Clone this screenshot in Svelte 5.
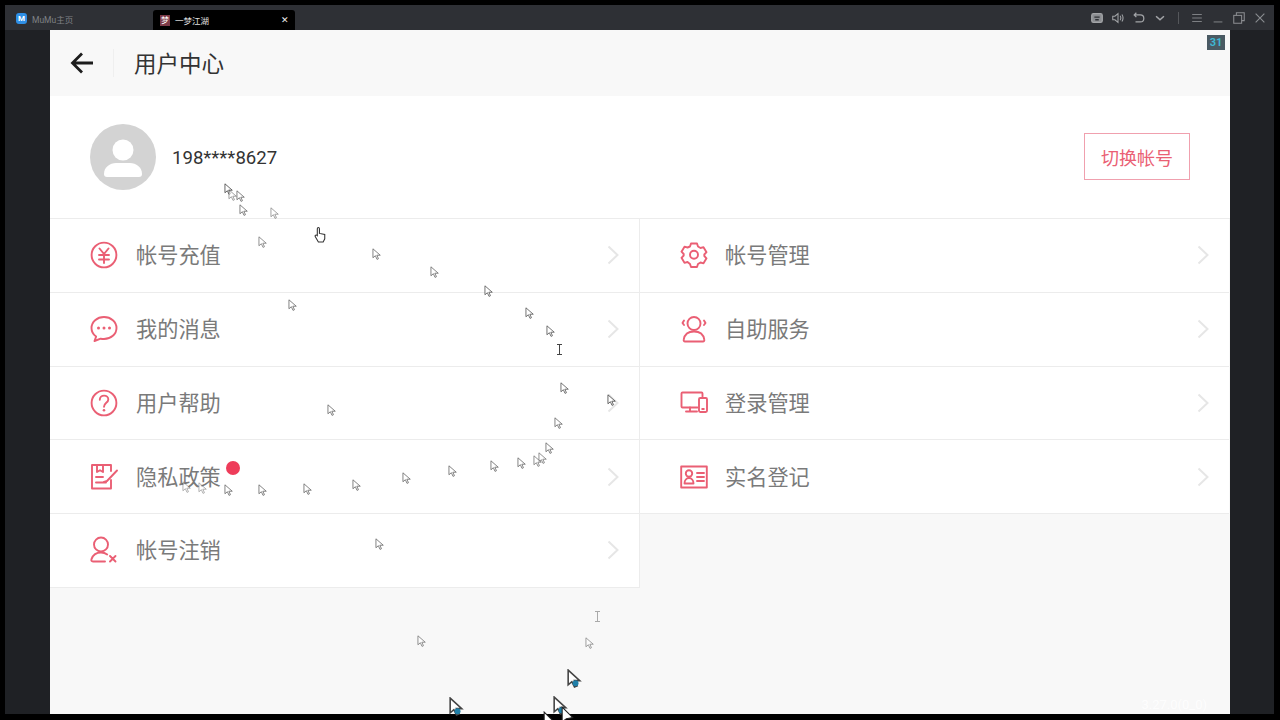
<script>
    // cursor trail left on the screen by the recording: [x, y, opacity]
    const cursors = [
        [224, 183, 1], [228, 189, .6], [236, 190, .8], [239, 204, .8],
        [270, 207, .6], [258, 236, .7], [372, 248, .8], [430, 266, .8],
        [484, 285, .9], [288, 299, .8], [525, 307, .9], [546, 325, .9],
        [560, 382, .9], [607, 394, 1], [327, 404, .8], [554, 417, .8],
        [545, 442, .8], [538, 452, .7], [533, 455, .7], [517, 457, .8],
        [490, 460, .8], [448, 465, .8], [402, 472, .8], [352, 479, .8],
        [303, 483, .8], [258, 484, .8], [224, 484, .8], [198, 482, .5],
        [182, 481, .5], [375, 538, .8], [417, 635, .7], [585, 637, .6]
    ];
    const busy = [[567, 669], [449, 697], [553, 696]];

    const left = [
        { label: '帐号充值', icon: 'yen' },
        { label: '我的消息', icon: 'chat' },
        { label: '用户帮助', icon: 'help' },
        { label: '隐私政策', icon: 'policy', dot: true },
        { label: '帐号注销', icon: 'remove' }
    ];
    const right = [
        { label: '帐号管理', icon: 'gear' },
        { label: '自助服务', icon: 'service' },
        { label: '登录管理', icon: 'devices' },
        { label: '实名登记', icon: 'idcard' }
    ];
</script>

{#snippet icon(name)}
    <svg class="icon" viewBox="0 0 28 28" fill="none" stroke="#ea5f74" stroke-width="1.900" stroke-linecap="round" stroke-linejoin="round">
        {#if name === 'yen'}
            <circle cx="14" cy="14" r="12.400" />
            <path d="M9.500 7.500 14 13l4.500-5.500M9 14h10M9 18.500h10M14 13v9" />
        {:else if name === 'chat'}
            <path d="M14 2C7 2 1.500 6.800 1.500 13c0 3.600 1.800 6.600 4.600 8.600L4.500 26l6.200-2.300c1 .2 2.200.3 3.300.3 7 0 12.500-4.800 12.500-11S21 2 14 2Z" />
            <circle cx="8.500" cy="13" r="1.500" fill="#ea5f74" stroke="none" />
            <circle cx="14" cy="13" r="1.500" fill="#ea5f74" stroke="none" />
            <circle cx="19.500" cy="13" r="1.500" fill="#ea5f74" stroke="none" />
        {:else if name === 'help'}
            <circle cx="14" cy="14" r="12.400" />
            <path d="M9.800 10.800c0-2.500 1.900-4.200 4.300-4.200s4.200 1.600 4.200 3.800c0 3.300-4.300 3.500-4.300 7.300" />
            <circle cx="14" cy="21.300" r="1.300" fill="#ea5f74" stroke="none" />
        {:else if name === 'policy'}
            <path d="M21 8V2H2v23.500h19V17" />
            <path d="M7 2v7l3-1.800L13 9V2M6 14h7M6 19.500h10" />
            <path d="M27 7.500 17 18l-3 1" />
        {:else if name === 'remove'}
            <circle cx="11" cy="8.500" r="7" />
            <path d="M3 25.500c-1.500 0-2-1-1.500-2.400C3 19 6.500 16.500 11 16.500c2.500 0 4.500.7 6.200 2M3 25.500h12" />
            <path d="m20 20 5.500 5.500M25.500 20 20 25.500" />
        {:else if name === 'gear'}
            <path d="M11 2.500h6l1 3 2.500 1.500 3-.8 3 5-2.200 2.300v1.500l2.200 2.300-3 5-3-.8-2.500 1.500-1 3h-6l-1-3L7.500 21l-3 .8-3-5 2.200-2.300V13L1.500 10.700l3-5 3 .8L10 5.500Z" />
            <circle cx="14" cy="13.800" r="4" />
        {:else if name === 'service'}
            <circle cx="14" cy="8.500" r="6.500" />
            <path d="M5 26.500c-1 0-1.500-.7-1.300-1.800C4.500 19.500 8.500 16.500 14 16.500s9.500 3 10.300 8.200c.2 1.100-.3 1.800-1.300 1.800Z" />
            <path d="M4 5.500 2.500 8 4 10M24 5.500 25.500 8 24 10" />
        {:else if name === 'devices'}
            <path d="M17.500 18.500H2.500c-.6 0-1-.4-1-1V4.500c0-.6.400-1 1-1h19c.6 0 1 .4 1 1v3" />
            <path d="M10 18.500v4M6 22.500h11" />
            <rect x="19" y="9" width="8" height="14" rx="1.200" />
            <path d="M22.200 20h1.600" />
        {:else if name === 'idcard'}
            <rect x="1.200" y="3.500" width="25.600" height="21" />
            <circle cx="9" cy="10.500" r="3.200" />
            <path d="M4.500 20.500c0-3.200 2-5.500 4.500-5.500s4.500 2.300 4.500 5.500ZM17 10h7M17 14h7M17 18h7" />
        {/if}
    </svg>
{/snippet}

{#snippet row(item)}
    <div class="row">
        {@render icon(item.icon)}
        <span class="label">{item.label}</span>
        {#if item.dot}<span class="dot"></span>{/if}
        <svg class="chev" viewBox="0 0 12 20" fill="none" stroke="#e6e6e6" stroke-width="2">
            <path d="m1.500 1.500 9 8.500-9 8.500" />
        </svg>
    </div>
{/snippet}

<div class="screen">
    <div class="window">
        <div class="titlebar">
            <div class="tab home">
                <span class="mumu">M</span>
                <span>MuMu主页</span>
            </div>
            <div class="tab active">
                <span class="game">梦</span>
                <span>一梦江湖</span>
                <span class="close">✕</span>
            </div>
            <div class="tools">
                <svg viewBox="0 0 16 16" fill="none" stroke="#a3a5a8" stroke-width="1.500"><rect x="2" y="3" width="12" height="10" rx="2" fill="#8a8c90"/><path d="M5 7h6M6 10h4" stroke="#2e3035"/></svg>
                <svg viewBox="0 0 16 16" fill="none" stroke="#a3a5a8" stroke-width="1.200"><path d="M2 6v4h2.500L8 13V3L4.500 6ZM10.500 5.500c1 1.500 1 3.500 0 5M12.500 4c1.600 2.500 1.600 5.500 0 8"/></svg>
                <svg viewBox="0 0 16 16" fill="none" stroke="#a3a5a8" stroke-width="1.400"><path d="M5 2 2.500 4.500 5 7M3 4.500h6.500a3.500 3.500 0 0 1 0 8H4"/></svg>
                <svg viewBox="0 0 16 16" fill="none" stroke="#a3a5a8" stroke-width="1.800"><path d="m3.500 6 4.500 4 4.500-4"/></svg>
                <span class="sep"></span>
                <svg viewBox="0 0 16 16" fill="none" stroke="#7d7f83" stroke-width="1.200"><path d="M2.500 4h11M2.500 8h11M2.500 12h11"/></svg>
                <svg viewBox="0 0 16 16" fill="none" stroke="#7d7f83" stroke-width="1.200"><path d="M3 12.500h10"/></svg>
                <svg viewBox="0 0 16 16" fill="none" stroke="#8a8c90" stroke-width="1.200"><rect x="2" y="5" width="9" height="9"/><path d="M5 5V2h9v9h-3"/></svg>
                <svg viewBox="0 0 16 16" fill="none" stroke="#8a8c90" stroke-width="1.300"><path d="m3 3 10 10M13 3 3 13"/></svg>
            </div>
        </div>

        <div class="body">
            <main class="content">
                <header class="head">
                    <svg class="back" viewBox="0 0 24 22" fill="none" stroke="#1d1d1d" stroke-width="2.800">
                        <path d="M23 11H3M12 1.500 2.500 11l9.500 9.500" />
                    </svg>
                    <span class="divider"></span>
                    <h1>用户中心</h1>
                </header>

                <section class="profile">
                    <div class="avatar">
                        <svg viewBox="0 0 66 66" fill="#fff">
                            <circle cx="33" cy="26" r="10.500" />
                            <path d="M17 53c-2 0-3-1-3-3 0-7 6-11 12-11h14c6 0 12 4 12 11 0 2-1 3-3 3Z" />
                        </svg>
                    </div>
                    <span class="phone">198****8627</span>
                    <button class="switch">切换帐号</button>
                </section>

                <section class="menu">
                    <div class="col">
                        {#each left as item}
                            {@render row(item)}
                        {/each}
                    </div>
                    <div class="col">
                        {#each right as item}
                            {@render row(item)}
                        {/each}
                    </div>
                </section>

                <span class="fps">31</span>
                <span class="version">3.27.0(0_0)</span>
            </main>
        </div>
    </div>

    <!-- recorded pointer trail -->
    {#each cursors as [x, y, o]}
        <svg class="cursor" style="left:{x}px;top:{y}px;opacity:{o}" viewBox="0 0 12 16" fill="#fff" stroke="#444" stroke-width="1">
            <path d="M1 1v11l3-2.500 2 4.500 1.800-.8-2-4.300H10Z" />
        </svg>
    {/each}
    {#each busy as [x, y]}
        <svg class="cursor big" style="left:{x}px;top:{y}px" viewBox="0 0 14 18">
            <path d="M1 1v14l3.500-3 2.500 5 2.500-1-2.500-5H12Z" fill="#fff" stroke="#444" stroke-width="1.500" />
            <circle cx="8" cy="13.500" r="2.800" fill="#1f7fa8" />
        </svg>
    {/each}
    <svg class="cursor hand" style="left:314px;top:226px" viewBox="0 0 12 16" fill="#fff" stroke="#333" stroke-width="1">
        <path d="M3 9V2.500c0-1.500 2-1.500 2 0V7l5 1v4l-1.500 3H4L1 10c-.6-1.300 1-2 2-1Z" />
    </svg>
    <svg class="beam" style="left:556px;top:344px" viewBox="0 0 7 11" fill="none" stroke="#444"><path d="M1 .5h5M3.500.5v10M1 10.500h5" /></svg>
    <svg class="beam" style="left:594px;top:611px" viewBox="0 0 7 11" fill="none" stroke="#aaa"><path d="M1 .5h5M3.500.5v10M1 10.500h5" /></svg>
    <svg class="cursor big" style="left:543px;top:711px" viewBox="0 0 14 18"><path d="M1 1v14l4-3 6-1Z" fill="#fff" stroke="#222"/></svg>
    <svg class="cursor big" style="left:561px;top:706px" viewBox="0 0 14 18"><path d="M1 1v14l4-3 6-1Z" fill="#fff" stroke="#222"/></svg>
</div>

<style>
    :global(body) {
        background: #000;
    }

    .screen {
        position: relative;
        width: 1280px;
        height: 720px;
        overflow: hidden;
        background: #000;
        padding: 5px 6px 6px 5px;
        box-sizing: border-box;
        font-family: Roboto, "Noto Sans CJK SC", sans-serif;
    }

    .window {
        height: 100%;
        display: flex;
        flex-direction: column;
        background: #1f2125;
    }

    .titlebar {
        height: 25px;
        flex: none;
        background: #2e3035;
        display: flex;
        align-items: flex-end;
        font-size: 8.500px;
        color: #7f8185;
    }

    .tab {
        display: flex;
        align-items: center;
        gap: 5px;
        height: 20px;
    }

    .tab.home {
        width: 148px;
        padding-left: 11px;
        box-sizing: border-box;
        padding-bottom: 3px;
    }

    .mumu {
        width: 11px;
        height: 11px;
        border-radius: 3px;
        background: #2f8fe6;
        color: #fff;
        font-size: 8px;
        font-weight: 700;
        line-height: 11px;
        text-align: center;
    }

    .tab.active {
        width: 142px;
        box-sizing: border-box;
        padding: 0 6px 0 7px;
        background: #000;
        color: #e2e2e2;
        border-radius: 3px 3px 0 0;
    }

    .game {
        width: 10px;
        height: 11px;
        background: #7c3a48;
        color: #fff;
        font-size: 8px;
        line-height: 11px;
        text-align: center;
    }

    .close {
        margin-left: auto;
        font-size: 9px;
        color: #eee;
    }

    .tools {
        margin-left: auto;
        align-self: center;
        display: flex;
        align-items: center;
        gap: 7px;
        padding-right: 7px;
    }

    .tools svg {
        width: 14px;
        height: 14px;
    }

    .sep {
        width: 1px;
        height: 12px;
        background: #55575b;
        margin: 0 4px;
    }

    .body {
        flex: 1;
        min-height: 0;
        padding: 0 44px 0 45px;
    }

    .content {
        position: relative;
        height: 100%;
        background: #f8f8f8;
    }

    .head {
        height: 66px;
        display: flex;
        align-items: center;
        padding-left: 20px;
    }

    .back {
        width: 24px;
        height: 22px;
    }

    .divider {
        width: 1px;
        height: 28px;
        background: #efefef;
        margin: 0 20px 0 19px;
    }

    h1 {
        margin: -2px 0 0;
        font-size: 22.500px;
        font-weight: 400;
        color: #333;
    }

    .profile {
        height: 123px;
        background: #fff;
        display: flex;
        align-items: center;
        padding: 0 40px;
        box-sizing: border-box;
        border-bottom: 1px solid #ececec;
    }

    .avatar {
        width: 66px;
        height: 66px;
        border-radius: 50%;
        background: #d3d3d3;
    }

    .avatar svg {
        display: block;
    }

    .phone {
        margin: 2px 0 0 16px;
        font-size: 18.600px;
        color: #333;
    }

    .switch {
        margin: -1px 0 0 auto;
        width: 106px;
        height: 47px;
        background: #fff;
        border: 1px solid #f0a0ae;
        padding: 0;
        border-radius: 0;
        color: #ea5f74;
        font-family: inherit;
        font-size: 18px;
    }

    .menu {
        display: grid;
        grid-template-columns: 590px 589px;
    }

    .col:first-child {
        border-right: 1px solid #ececec;
        box-sizing: border-box;
    }

    .row {
        height: 73.750px;
        box-sizing: border-box;
        background: #fff;
        border-bottom: 1px solid #ececec;
        display: flex;
        align-items: center;
        padding: 0 20px 0 40px;
    }

    .icon {
        width: 28px;
        height: 28px;
        flex: none;
    }

    .label {
        margin: -3px 0 0 18px;
        font-size: 21.200px;
        color: #7a7a7a;
    }

    .col + .col .label {
        margin-left: 17px;
    }

    .dot {
        width: 14px;
        height: 14px;
        border-radius: 50%;
        background: #ee3c5a;
        margin: -17px 0 0 5px;
    }

    .chev {
        width: 12px;
        height: 20px;
        margin-left: auto;
    }

    .fps {
        position: absolute;
        top: 5px;
        right: 5px;
        width: 18px;
        height: 15px;
        background: #4a5a63;
        color: #3fb7d4;
        font-size: 11px;
        font-weight: 700;
        line-height: 15px;
        text-align: center;
    }

    .version {
        position: absolute;
        right: 23px;
        bottom: 2px;
        font-size: 13px;
        color: #fff;
        opacity: .85;
    }

    .cursor {
        position: absolute;
        width: 10px;
        height: 13px;
    }

    .cursor.big {
        width: 15px;
        height: 19px;
    }

    .cursor.hand {
        width: 13px;
        height: 17px;
    }

    .beam {
        position: absolute;
        width: 7px;
        height: 11px;
    }
</style>
